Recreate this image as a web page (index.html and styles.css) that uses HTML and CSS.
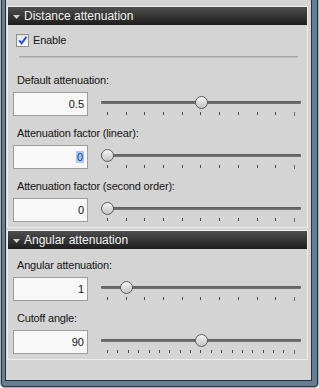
FILE: index.html
```html
<!DOCTYPE html>
<html lang="en">
<head>
  <meta charset="UTF-8" />
  <title>Light attenuation</title>
  <link rel="stylesheet" href="styles.css">
</head>
<body>
  <div class="frame">
    <div class="frame-in">
      <div class="client">

        <section class="group">
          <div class="group-head">
            <svg class="arrow" width="7" height="4" viewBox="0 0 7 4"><polygon points="0,0 7,0 3.5,4" /></svg>
            Distance attenuation
          </div>
          <div class="group-body">
            <label class="check">
              <span class="box">
                <svg width="11" height="11" viewBox="0 0 11 11"><polyline points="2.2,5.4 4.6,8.4 9.4,1.8" /></svg>
              </span>
              Enable
            </label>
            <div class="rule"></div>

            <div class="field">
              <div class="field-label">Default attenuation:</div>
              <div class="field-row">
                <div class="num">0.5</div>
                <div class="slider">
                  <div class="track"></div>
                  <div class="ticks">
                    <i></i><i></i><i></i><i></i><i></i><i></i><i></i><i></i><i></i><i></i><i></i>
                  </div>
                  <div class="rail"><div class="thumb" style="left: 50%"></div></div>
                </div>
              </div>
            </div>

            <div class="field">
              <div class="field-label">Attenuation factor (linear):</div>
              <div class="field-row">
                <div class="num"><span class="sel">0</span></div>
                <div class="slider">
                  <div class="track"></div>
                  <div class="ticks">
                    <i></i><i></i><i></i><i></i><i></i><i></i><i></i><i></i><i></i><i></i><i></i>
                  </div>
                  <div class="rail"><div class="thumb" style="left: 0%"></div></div>
                </div>
              </div>
            </div>

            <div class="field">
              <div class="field-label">Attenuation factor (second order):</div>
              <div class="field-row">
                <div class="num">0</div>
                <div class="slider">
                  <div class="track"></div>
                  <div class="ticks">
                    <i></i><i></i><i></i><i></i><i></i><i></i><i></i><i></i><i></i><i></i><i></i>
                  </div>
                  <div class="rail"><div class="thumb" style="left: 0%"></div></div>
                </div>
              </div>
            </div>
          </div>
        </section>

        <section class="group group-second">
          <div class="group-head">
            <svg class="arrow" width="7" height="4" viewBox="0 0 7 4"><polygon points="0,0 7,0 3.5,4" /></svg>
            Angular attenuation
          </div>
          <div class="group-body body-second">
            <div class="field">
              <div class="field-label">Angular attenuation:</div>
              <div class="field-row">
                <div class="num">1</div>
                <div class="slider">
                  <div class="track"></div>
                  <div class="ticks">
                    <i></i><i></i><i></i><i></i><i></i><i></i><i></i><i></i><i></i><i></i><i></i>
                  </div>
                  <div class="rail"><div class="thumb" style="left: 10%"></div></div>
                </div>
              </div>
            </div>

            <div class="field">
              <div class="field-label">Cutoff angle:</div>
              <div class="field-row">
                <div class="num">90</div>
                <div class="slider">
                  <div class="track"></div>
                  <div class="ticks">
                    <i></i><i></i><i></i><i></i><i></i><i></i><i></i><i></i><i></i><i></i>
                    <i></i><i></i><i></i><i></i><i></i><i></i><i></i><i></i><i></i>
                  </div>
                  <div class="rail"><div class="thumb" style="left: 50%"></div></div>
                </div>
              </div>
            </div>
          </div>
        </section>

      </div>
    </div>
  </div>
</body>
</html>
```

FILE: styles.css
```css
* {
  box-sizing: border-box;
}

body {
  margin: 0;
  padding: 0;
  font-family: 'Liberation Sans', Arial, sans-serif;
  font-size: 11px;
  color: #141414;
}

/* window frame */
.frame {
  width: 319px;
  height: 388px;
  border: 1px solid #a9b4bf;
  border-top: 0;
  border-radius: 0 0 5px 5px;
  background: #687d92;
}

.frame-in {
  height: 100%;
  border: 1px solid #2c343c;
  border-top: 0;
  border-radius: 0 0 4px 4px;
  padding: 0 5px 5px 3px;
  background: #687d92;
}

.client {
  height: 100%;
  border: 1px solid #2b3137;
  border-top: 0;
  background: #d4d4d4;
  padding-top: 6px;
}

/* collapsible groups */
.group {
  margin: 0 3px 0 1px;
  border: 1px solid #ededed;
}

.group-second {
  margin-top: 2px;
}

.group-head {
  height: 18px;
  display: flex;
  align-items: center;
  padding-left: 5px;
  gap: 4px;
  font-size: 12px;
  line-height: 18px;
  color: #f2f2f2;
  background: linear-gradient(#4e4e4e, #343434 55%, #1d1d1d);
}

.arrow {
  fill: #d0d0d0;
  margin-top: 1px;
}

.group-body {
  padding: 9px 0 5px 5px;
}

.body-second {
  padding-top: 10px;
}

/* checkbox */
.check {
  display: flex;
  align-items: center;
  height: 13px;
  line-height: 13px;
  margin-left: 3px;
  gap: 4px;
  letter-spacing: -0.2px;
}

.box {
  width: 13px;
  height: 13px;
  border: 1px solid #8e8f90;
  background: linear-gradient(#e4e4e4, #fbfbfb);
  display: flex;
  align-items: center;
  justify-content: center;
}

.box polyline {
  fill: none;
  stroke: #2c54c4;
  stroke-width: 2;
}

.rule {
  margin: 9px 9px 16px 6px;
  height: 2px;
  border-top: 1px solid #a6a6a6;
  border-bottom: 1px solid #bebebe;
}

/* label + number + slider */
.field + .field {
  margin-top: 11px;
}

.field-label {
  height: 13px;
  line-height: 13px;
  padding-left: 4px;
  margin-bottom: 5px;
  letter-spacing: -0.18px;
}

.field-row {
  display: flex;
  align-items: flex-start;
}

.num {
  width: 75px;
  height: 24px;
  border: 1px solid #9d9d9d;
  background: #f8f8f8;
  text-align: right;
  padding-right: 3px;
  line-height: 22px;
  color: #111;
}

.sel {
  display: inline-block;
  line-height: 12px;
  padding: 0 1px;
  background: #a9c9f0;
  color: #1d3d8f;
}

.slider {
  position: relative;
  width: 200px;
  height: 24px;
  margin-left: 13px;
}

.track {
  position: absolute;
  top: 9px;
  left: 0;
  right: 0;
  height: 3px;
  border-radius: 1px;
  background: linear-gradient(#5c5c5c, #767676);
}

.ticks {
  position: absolute;
  top: 20px;
  left: 6px;
  width: 188px;
  display: flex;
  justify-content: space-between;
}

.ticks i {
  width: 1px;
  height: 3px;
  background: #4a4a4a;
}

.ticks i:last-child {
  height: 4px;
  background: #6a6a6a;
}

.rail {
  position: absolute;
  top: 4px;
  left: 0;
  width: 187px;
  height: 13px;
}

.thumb {
  position: absolute;
  top: 0;
  width: 13px;
  height: 13px;
  border-radius: 50%;
  border: 1px solid #5e5e5e;
  background: linear-gradient(#f4f4f4, #dcdcdc 50%, #c4c4c4);
}
```
